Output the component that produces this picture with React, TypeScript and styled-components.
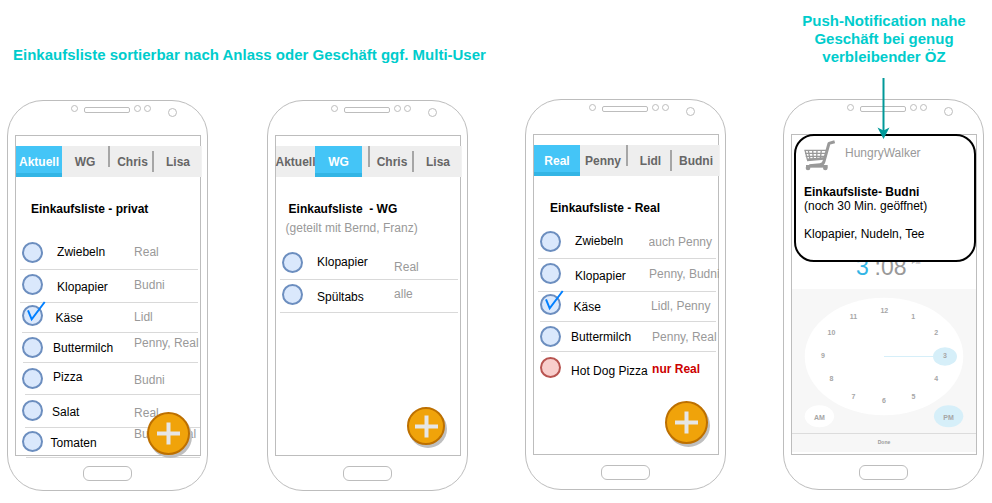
import React from "react";
import styled, { createGlobalStyle, css } from "styled-components";

const LINE = "#bdbdbd";

const GlobalStyle = createGlobalStyle`
  *, *::before, *::after { box-sizing: border-box; }
  body {
    margin: 0;
    background: #fff;
    font-family: "Liberation Sans", Arial, Helvetica, sans-serif;
    font-size: 12px;
    line-height: 14px;
    color: #000;
  }
`;

const Page = styled.main`
  width: 992px;
  height: 503px;
  overflow: hidden;
`;

const Header = styled.header`
  display: flex;
  justify-content: space-between;
  align-items: flex-start;
  height: 99px;
  padding: 12px 24px 0 13px;
`;

const Caption = styled.h2<{ $drop?: number; $center?: boolean }>`
  margin: ${(p) => p.$drop ?? 0}px 0 0;
  font-size: 15px;
  line-height: 18px;
  font-weight: bold;
  color: #00cccc;
  white-space: nowrap;
  text-align: ${(p) => (p.$center ? "center" : "left")};
  ${(p) => p.$center && css`width: 168px;`}
`;

const Stage = styled.div`
  display: grid;
  grid-template-columns: 201px 201px 201px 201px;
  column-gap: 57px;
  padding-left: 9px;
  align-items: start;
`;

const PhoneBody = styled.section<{ $x?: number; $y?: number }>`
  display: flex;
  flex-direction: column;
  width: 201px;
  height: 391px;
  margin: ${(p) => p.$y ?? 0}px 0 0 ${(p) => p.$x ?? 0}px;
  padding: 0 7px;
  border: 1px solid ${LINE};
  border-radius: 36px;
`;

const Bezel = styled.div`
  display: flex;
  flex: none;
  align-items: flex-start;
  height: 34px;
  padding: 4px 0 0 56px;
`;

const Sensor = styled.span<{ $size?: number; $left?: number; $top?: number }>`
  flex: none;
  width: ${(p) => p.$size ?? 7}px;
  height: ${(p) => p.$size ?? 7}px;
  margin: ${(p) => p.$top ?? 0}px 0 0 ${(p) => p.$left ?? 0}px;
  border: 1px solid ${LINE};
  border-radius: 50%;
`;

const Speaker = styled.span`
  flex: none;
  width: 46px;
  height: 6px;
  margin: 2px 0 0 6px;
  border: 1px solid ${LINE};
  border-radius: 2px;
`;

const Screen = styled.div`
  position: relative;
  flex: none;
  display: flex;
  flex-direction: column;
  width: 186px;
  height: 321px;
  border: 1px solid ${LINE};
`;

const HomeButton = styled.div`
  flex: none;
  width: 49px;
  height: 15px;
  margin: 10px 0 0 68px;
  border: 1px solid ${LINE};
  border-radius: 6px;
`;

const Tabs = styled.nav<{ $narrowFirst?: boolean }>`
  flex: none;
  display: grid;
  grid-template-columns: ${(p) => (p.$narrowFirst ? "40px 46px" : "46px 46px")} 47px 46px;
  justify-content: end;
  width: 185px;
  height: 31px;
  margin-top: 10px;
  background: #eeeeee;
  box-shadow: 1px 0 0 #f2f2f2;
  ${(p) =>
    p.$narrowFirst &&
    css`
      grid-template-columns: 39px 52px 48px 46px;
      & > :nth-child(2) { width: 47px; }
      & > :nth-child(3)::before { left: 1px; }
    `}
`;

const Tab = styled.div<{ $active?: boolean; $divider?: "high" | "low" }>`
  position: relative;
  display: flex;
  justify-content: center;
  align-items: center;
  padding-left: ${(p) => (p.$divider === "high" ? 2 : 0)}px;
  font-weight: bold;
  white-space: nowrap;
  color: ${(p) => (p.$active ? "#fff" : "#666")};
  ${(p) =>
    p.$active &&
    css`
      background: #44c5f7;
      box-shadow: inset 0 -4px 0 #33b5e5;
    `}
  ${(p) =>
    p.$divider &&
    css`
      &::before {
        content: "";
        position: absolute;
        left: ${p.$divider === "high" ? 0 : -3}px;
        top: ${p.$divider === "high" ? 0 : 5}px;
        width: 2px;
        height: 21px;
        background: #a6a6a6;
      }
    `}
`;

const Title = styled.h3<{ $x: number }>`
  margin: 25px 0 0 ${(p) => p.$x}px;
  font-size: 12px;
  line-height: 14px;
  font-weight: bold;
  white-space: pre;
`;

const Subtitle = styled.p`
  margin: 5px 0 0 9.6px;
  color: #999;
  white-space: nowrap;
`;

const List = styled.ul<{ $gap: number }>`
  list-style: none;
  margin: ${(p) => p.$gap}px 0 0;
  padding: 0;
`;

const ItemRow = styled.li<{ $h: number }>`
  display: grid;
  grid-template-columns: 34.6px 80px 70.4px;
  grid-template-rows: ${(p) => p.$h - 1}px 1px;
  align-items: start;
  white-space: nowrap;
`;

const Dot = styled.span<{ $top: number; $alert?: boolean }>`
  width: 21px;
  height: 21px;
  margin: ${(p) => p.$top}px 0 0 6px;
  border: 2px solid ${(p) => (p.$alert ? "#b85450" : "#6c8ebf")};
  border-radius: 50%;
  background: ${(p) => (p.$alert ? "#f8cecc" : "#dae8fc")};
`;

const Check = styled.svg`
  display: block;
  overflow: visible;
  width: 17px;
  height: 17px;
`;

const Name = styled.span<{ $x: number; $y: number }>`
  padding-left: ${(p) => p.$x}px;
  margin-top: ${(p) => p.$y}px;
`;

const Note = styled.span<{ $x: number; $y: number; $alert?: boolean }>`
  padding-left: ${(p) => p.$x}px;
  margin-top: ${(p) => p.$y}px;
  overflow: clip;
  color: ${(p) => (p.$alert ? "#cc0000" : "#999")};
  font-weight: ${(p) => (p.$alert ? "bold" : "normal")};
`;

const Rule = styled.span<{ $x: number; $w: number }>`
  grid-column: 1 / -1;
  width: ${(p) => p.$w}px;
  height: 1px;
  margin-left: ${(p) => p.$x}px;
  background: #d9d9d9;
`;

const AddButton = styled.button<{ $size: number; $x: number; $y: number }>`
  position: absolute;
  left: ${(p) => p.$x}px;
  top: ${(p) => p.$y}px;
  display: grid;
  place-items: center;
  width: ${(p) => p.$size}px;
  height: ${(p) => p.$size}px;
  padding: 0;
  border: 2px solid #bd7000;
  border-radius: 50%;
  background: #f0a30a;
  box-shadow: 2px 3px 0 #bfbfbf;
`;

const Notification = styled.article`
  position: absolute;
  z-index: 1;
  left: 2px;
  top: -1px;
  width: 182px;
  height: 128px;
  padding: 4px 8px;
  border: 2px solid #000;
  border-radius: 20px;
  background: #fff;
`;

const AppLine = styled.div`
  display: flex;
  gap: 10px;
  height: 45px;
  color: #999;
  line-height: 26px;
`;

const Message = styled.p`
  margin: 0 0 14px;
`;

const Time = styled.div`
  display: flex;
  align-items: flex-start;
  height: 154px;
  padding: 119px 0 0 64px;
  font-size: 23px;
  line-height: 26px;
  color: #999;
`;

const Hour = styled.span`
  color: #33b5e5;
  width: 18.5px;
`;

const Meridiem = styled.span`
  margin: 4px 0 0 5px;
  font-size: 6px;
  line-height: 8px;
`;

const PickerPanel = styled.div`
  width: 184px;
  height: 163px;
  background: #f7f7f7;
`;

const Dial = styled.svg`
  display: block;
  font-weight: bold;
  font-size: 7px;
`;

const DoneBar = styled.div`
  height: 19px;
  border-top: 1px solid #dcdcdc;
  text-align: center;
  font-size: 5px;
  line-height: 17px;
  font-weight: bold;
  color: #999;
`;

const ArrowMark = styled.svg`
  position: absolute;
  z-index: 2;
  left: 84px;
  top: -58px;
`;

type Item = {
  h: number;
  dot: number;
  name: string;
  nx: number;
  ny: number;
  note: string;
  tx: number;
  ty: number;
  rule?: [number, number];
  checked?: boolean;
  alert?: boolean;
};

const privateItems: Item[] = [
  { h: 33, dot: 5, name: "Zwiebeln", nx: 6.5, ny: 8, note: "Real", tx: 3.5, ty: 8, rule: [4, 178] },
  { h: 33, dot: 4, name: "Klopapier", nx: 6.5, ny: 10, note: "Budni", tx: 3.5, ty: 8, rule: [4, 178] },
  { h: 30, dot: 2, name: "Käse", nx: 5, ny: 8, note: "Lidl", tx: 3.5, ty: 7, rule: [6, 176], checked: true },
  { h: 30, dot: 4, name: "Buttermilch", nx: 2.5, ny: 8, note: "Penny, Real", tx: 3.5, ty: 3, rule: [7, 175] },
  { h: 32, dot: 5, name: "Pizza", nx: 2.5, ny: 7, note: "Budni", tx: 3.5, ty: 10, rule: [9, 175] },
  { h: 33, dot: 5, name: "Salat", nx: 1.5, ny: 10, note: "Real", tx: 3.5, ty: 11, rule: [9, 175] },
  { h: 30, dot: 3, name: "Tomaten", nx: -0, ny: 8, note: "Budni, Real", tx: 3.5, ty: -1, rule: [10, 174] },
];

const sharedItems: Item[] = [
  { h: 33, dot: 5, name: "Klopapier", nx: 6.5, ny: 8, note: "Real", tx: 3.5, ty: 13, rule: [4, 178] },
  { h: 33, dot: 4, name: "Spültabs", nx: 6.5, ny: 10, note: "alle", tx: 3.5, ty: 7, rule: [4, 178] },
];

const realItems: Item[] = [
  { h: 33, dot: 5, name: "Zwiebeln", nx: 6.5, ny: 8, note: "auch Penny", tx: 0, ty: 9, rule: [4, 178] },
  { h: 33, dot: 4, name: "Klopapier", nx: 6.5, ny: 10, note: "Penny, Budni", tx: 0.5, ty: 8, rule: [4, 178] },
  { h: 30, dot: 2, name: "Käse", nx: 5, ny: 8, note: "Lidl, Penny", tx: 2.5, ty: 7, rule: [6, 176], checked: true },
  { h: 30, dot: 4, name: "Buttermilch", nx: 2.5, ny: 8, note: "Penny, Real", tx: 3.5, ty: 8, rule: [7, 175] },
  { h: 30, dot: 5, name: "Hot Dog Pizza", nx: 2.5, ny: 12, note: "nur Real", tx: 3.5, ty: 10, alert: true },
];

const Phone = ({ x, y, children }: { x?: number; y?: number; children: React.ReactNode }) => (
  <PhoneBody $x={x} $y={y}>
    <Bezel>
      <Sensor />
      <Speaker />
      <Sensor $left={4} />
      <Sensor $left={3} />
      <Sensor $size={9} $left={17} $top={3} />
    </Bezel>
    <Screen>{children}</Screen>
    <HomeButton />
  </PhoneBody>
);

const TabBar = ({ labels, active }: { labels: string[]; active: number }) => (
  <Tabs $narrowFirst={active === 1}>
    {labels.map((label, i) => (
      <Tab key={label} $active={i === active} $divider={i === 2 ? "high" : i === 3 ? "low" : undefined}>
        {label}
      </Tab>
    ))}
  </Tabs>
);

const ShoppingList = ({ items, gap }: { items: Item[]; gap: number }) => (
  <List $gap={gap}>
    {items.map((it) => (
      <ItemRow key={it.name} $h={it.h}>
        <Dot $top={it.dot} $alert={it.alert}>
          {it.checked && (
            <Check viewBox="0 0 17 17">
              <path d="M4 3.3 L7.7 12.3 L20.7 -5" fill="none" stroke="#007fff" strokeWidth="2" />
            </Check>
          )}
        </Dot>
        <Name $x={it.nx} $y={it.ny}>{it.name}</Name>
        <Note $x={it.tx} $y={it.ty} $alert={it.alert}>{it.note}</Note>
        {it.rule && <Rule $x={it.rule[0]} $w={it.rule[1]} />}
      </ItemRow>
    ))}
  </List>
);

const Add = ({ size, x, y }: { size: number; x: number; y: number }) => (
  <AddButton $size={size} $x={x} $y={y} aria-label="Hinzufügen">
    <svg width="23" height="23" viewBox="0 0 23 23">
      <path d="M0 11.5H23M11.5 0.5V22.5" stroke="#e6e6e6" strokeWidth="4" />
    </svg>
  </AddButton>
);

const Cart = () => (
  <svg width="31" height="31" viewBox="96 28 93 93">
    <g fill="none" stroke="#999">
      <path d="M188 33 L171 38 L156 92 Q154 101 144 102 L112 105" strokeWidth="9" strokeLinejoin="round" />
      <path d="M97 59 H162 M99 68 H160 M101 77 H158 M99 58 L106 86 L156 82" strokeWidth="4" />
      <path d="M109 59 L114 86 M122 59 L124 86 M135 59 L134 85 M148 59 L145 84" strokeWidth="4" />
      <path d="M105 88 L156 84" strokeWidth="7" />
      <path d="M102 107 H167" strokeWidth="8" />
    </g>
    <circle cx="108" cy="112" r="7" fill="#999" />
    <circle cx="160" cy="112" r="7" fill="#999" />
  </svg>
);

const hours: [string, number, number][] = [
  ["12", 92.3, 21.5], ["1", 121.3, 27.5], ["2", 144.3, 43.5], ["3", 153, 66.5],
  ["4", 144.3, 89.5], ["5", 121.5, 107.5], ["6", 92, 111.5], ["7", 61.5, 107.5],
  ["8", 39.5, 89.5], ["9", 31, 66.5], ["10", 39.5, 43.5], ["11", 61.5, 27.5],
];

const ClockDial = () => (
  <Dial width="184" height="144" viewBox="0 0 184 144">
    <ellipse cx="92" cy="67.5" rx="79.3" ry="58.8" fill="#fff" />
    <path d="M92 67.5H142" stroke="#d6eff9" />
    <ellipse cx="153" cy="67.5" rx="12" ry="9.3" fill="#d6eff9" />
    <ellipse cx="27.4" cy="127.2" rx="14.7" ry="11" fill="#fff" />
    <ellipse cx="156.6" cy="127.2" rx="14.7" ry="11" fill="#d6eff9" />
    <g fill="#a6a6a6" textAnchor="middle">
      {hours.map(([t, x, y]) => (
        <text key={t} x={x} y={y + 2.5}>{t}</text>
      ))}
      <text x="27.5" y="131">AM</text>
      <text x="156.6" y="131">PM</text>
    </g>
  </Dial>
);

export default function App() {
  return (
    <Page>
      <GlobalStyle />
      <Header>
        <Caption $drop={34}>Einkaufsliste sortierbar nach Anlass oder Geschäft ggf. Multi-User</Caption>
        <Caption $center>
          Push-Notification nahe
          <br />
          Geschäft bei genug
          <br />
          verbleibender ÖZ
        </Caption>
      </Header>
      <Stage>
        <Phone x={-2} y={1}>
          <TabBar labels={["Aktuell", "WG", "Chris", "Lisa"]} active={0} />
          <Title $x={15}>Einkaufsliste - privat</Title>
          <ShoppingList items={privateItems} gap={21} />
          <Add size={43} x={131} y={276} />
        </Phone>
        <Phone y={1}>
          <TabBar labels={["Aktuell", "WG", "Chris", "Lisa"]} active={1} />
          <Title $x={12.6}>{"Einkaufsliste  - WG"}</Title>
          <Subtitle>(geteilt mit Bernd, Franz)</Subtitle>
          <ShoppingList items={sharedItems} gap={12} />
          <Add size={38} x={131} y={271} />
        </Phone>
        <Phone>
          <TabBar labels={["Real", "Penny", "Lidl", "Budni"]} active={0} />
          <Title $x={16}>Einkaufsliste - Real</Title>
          <ShoppingList items={realItems} gap={11} />
          <Add size={43} x={131} y={266} />
        </Phone>
        <Phone>
          <ArrowMark width="16" height="64" viewBox="0 0 16 64">
            <path d="M7.5 1V55" stroke="#009999" strokeWidth="2" />
            <path d="M7.5 62L1.5 50.5L7.5 53.5L13.5 50.5Z" fill="#009999" />
          </ArrowMark>
          <Notification>
            <AppLine>
              <Cart />
              <span>HungryWalker</span>
            </AppLine>
            <Message>
              <strong>Einkaufsliste- Budni</strong>
              <br />
              (noch 30 Min. geöffnet)
            </Message>
            <Message>Klopapier, Nudeln, Tee</Message>
          </Notification>
          <Time>
            <Hour>3</Hour>:08<Meridiem>PM</Meridiem>
          </Time>
          <PickerPanel>
            <ClockDial />
            <DoneBar>Done</DoneBar>
          </PickerPanel>
        </Phone>
      </Stage>
    </Page>
  );
}
